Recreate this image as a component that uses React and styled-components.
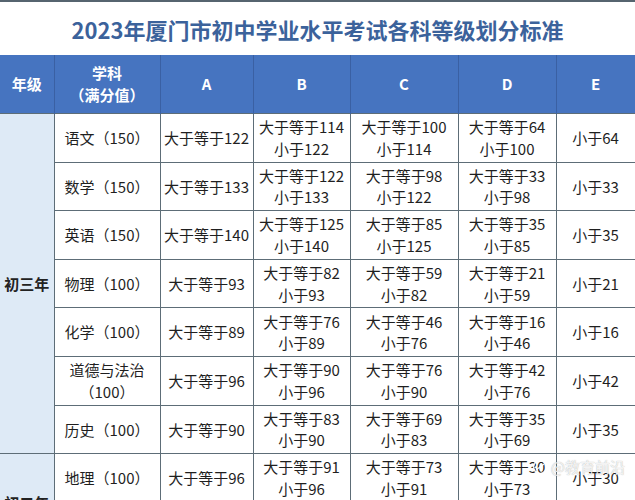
import React from 'react'
import styled, { createGlobalStyle } from 'styled-components'

const GlobalStyle = createGlobalStyle`
  html, body {
    margin: 0;
    padding: 0;
    background: #fff;
  }
  body {
    font-family: "Noto Sans CJK SC", "Noto Sans", sans-serif;
  }
`

const Page = styled.div`
  position: relative;
  width: 635px;
  height: 500px;
  overflow: hidden;
  border-top: 2px solid #56646f;
  box-sizing: border-box;
`

const Title = styled.h1`
  margin: 0;
  height: 53px;
  display: flex;
  align-items: center;
  justify-content: center;
  font-size: 22px;
  font-weight: 700;
  color: #3b629b;
  letter-spacing: 0;
`

const Table = styled.table`
  width: 635px;
  border-collapse: collapse;
  table-layout: fixed;
`

const HeadCell = styled.th`
  height: 58px;
  padding: 0;
  background: #4674c0;
  color: #fff;
  font-size: 15px;
  font-weight: 700;
  line-height: 22px;
  text-align: center;
  border-left: 1px solid #3a60a3;
  border-right: 1px solid #3a60a3;
  &:first-child { border-left: none; }
`

const Row = styled.tr`
  height: 48.6px;
`

const Cell = styled.td`
  padding: 0;
  text-align: center;
  vertical-align: middle;
  font-size: 15px;
  line-height: 21.5px;
  color: #1f1f1f;
  border: 1px solid #5d6d77;
  white-space: nowrap;
`

const GradeCell = styled(Cell)`
  background: #deeaf6;
  font-weight: 700;
  border-left: none;
  color: #222;
`

const Watermark = styled.div`
  position: absolute;
  right: 10px;
  bottom: 23px;
  display: flex;
  align-items: center;
  gap: 3px;
  font-size: 15px;
  color: rgba(255, 255, 255, 0.85);
  text-shadow: 0 0 1px rgba(90, 90, 90, 0.55);
  pointer-events: none;
`

const cols = [54, 106, 93, 97, 108, 98, 79]

const rows = [
  ['语文（150）', '122', ['114', '122'], ['100', '114'], ['64', '100'], '64'],
  ['数学（150）', '133', ['122', '133'], ['98', '122'], ['33', '98'], '33'],
  ['英语（150）', '140', ['125', '140'], ['85', '125'], ['35', '85'], '35'],
  ['物理（100）', '93', ['82', '93'], ['59', '82'], ['21', '59'], '21'],
  ['化学（100）', '89', ['76', '89'], ['46', '76'], ['16', '46'], '16'],
  ['道德与法治\n（100）', '96', ['90', '96'], ['76', '90'], ['42', '76'], '42'],
  ['历史（100）', '90', ['83', '90'], ['69', '83'], ['35', '69'], '35'],
]

const rows2 = [
  ['地理（100）', '96', ['91', '96'], ['73', '91'], ['30', '73'], '30'],
  ['生物（100）', '96', ['91', '96'], ['73', '91'], ['30', '73'], '30'],
]

const Lines = ({ text }) =>
  text.split('\n').map((t, i) => <div key={i}>{t}</div>)

const DataCells = ({ r }) => (
  <>
    <Cell><Lines text={r[0]} /></Cell>
    <Cell>大于等于{r[1]}</Cell>
    {[r[2], r[3], r[4]].map((p, i) => (
      <Cell key={i}>
        <div>大于等于{p[0]}</div>
        <div>小于{p[1]}</div>
      </Cell>
    ))}
    <Cell>小于{r[5]}</Cell>
  </>
)

const WaterIcon = () => (
  <svg width="16" height="16" viewBox="0 0 16 16">
    <circle cx="8" cy="8" r="6.5" fill="none" stroke="rgba(255,255,255,0.9)" strokeWidth="1.5" />
    <path d="M4 11 L12 5" stroke="rgba(255,255,255,0.9)" strokeWidth="1.5" />
  </svg>
)

export default function App() {
  return (
    <>
      <GlobalStyle />
      <Page>
        <Title>2023年厦门市初中学业水平考试各科等级划分标准</Title>
        <Table>
          <colgroup>
            {cols.map((w, i) => <col key={i} style={{ width: w }} />)}
          </colgroup>
          <thead>
            <tr>
              <HeadCell>年级</HeadCell>
              <HeadCell><div>学科</div><div>（满分值）</div></HeadCell>
              <HeadCell>A</HeadCell>
              <HeadCell>B</HeadCell>
              <HeadCell>C</HeadCell>
              <HeadCell>D</HeadCell>
              <HeadCell>E</HeadCell>
            </tr>
          </thead>
          <tbody>
            {rows.map((r, i) => (
              <Row key={i}>
                {i === 0 && <GradeCell rowSpan={rows.length}>初三年</GradeCell>}
                <DataCells r={r} />
              </Row>
            ))}
            {rows2.map((r, i) => (
              <Row key={'b' + i}>
                {i === 0 && <GradeCell rowSpan={rows2.length}>初二年</GradeCell>}
                <DataCells r={r} />
              </Row>
            ))}
          </tbody>
        </Table>
        <Watermark>
          <WaterIcon />
          <span>@教育前沿</span>
        </Watermark>
      </Page>
    </>
  )
}
